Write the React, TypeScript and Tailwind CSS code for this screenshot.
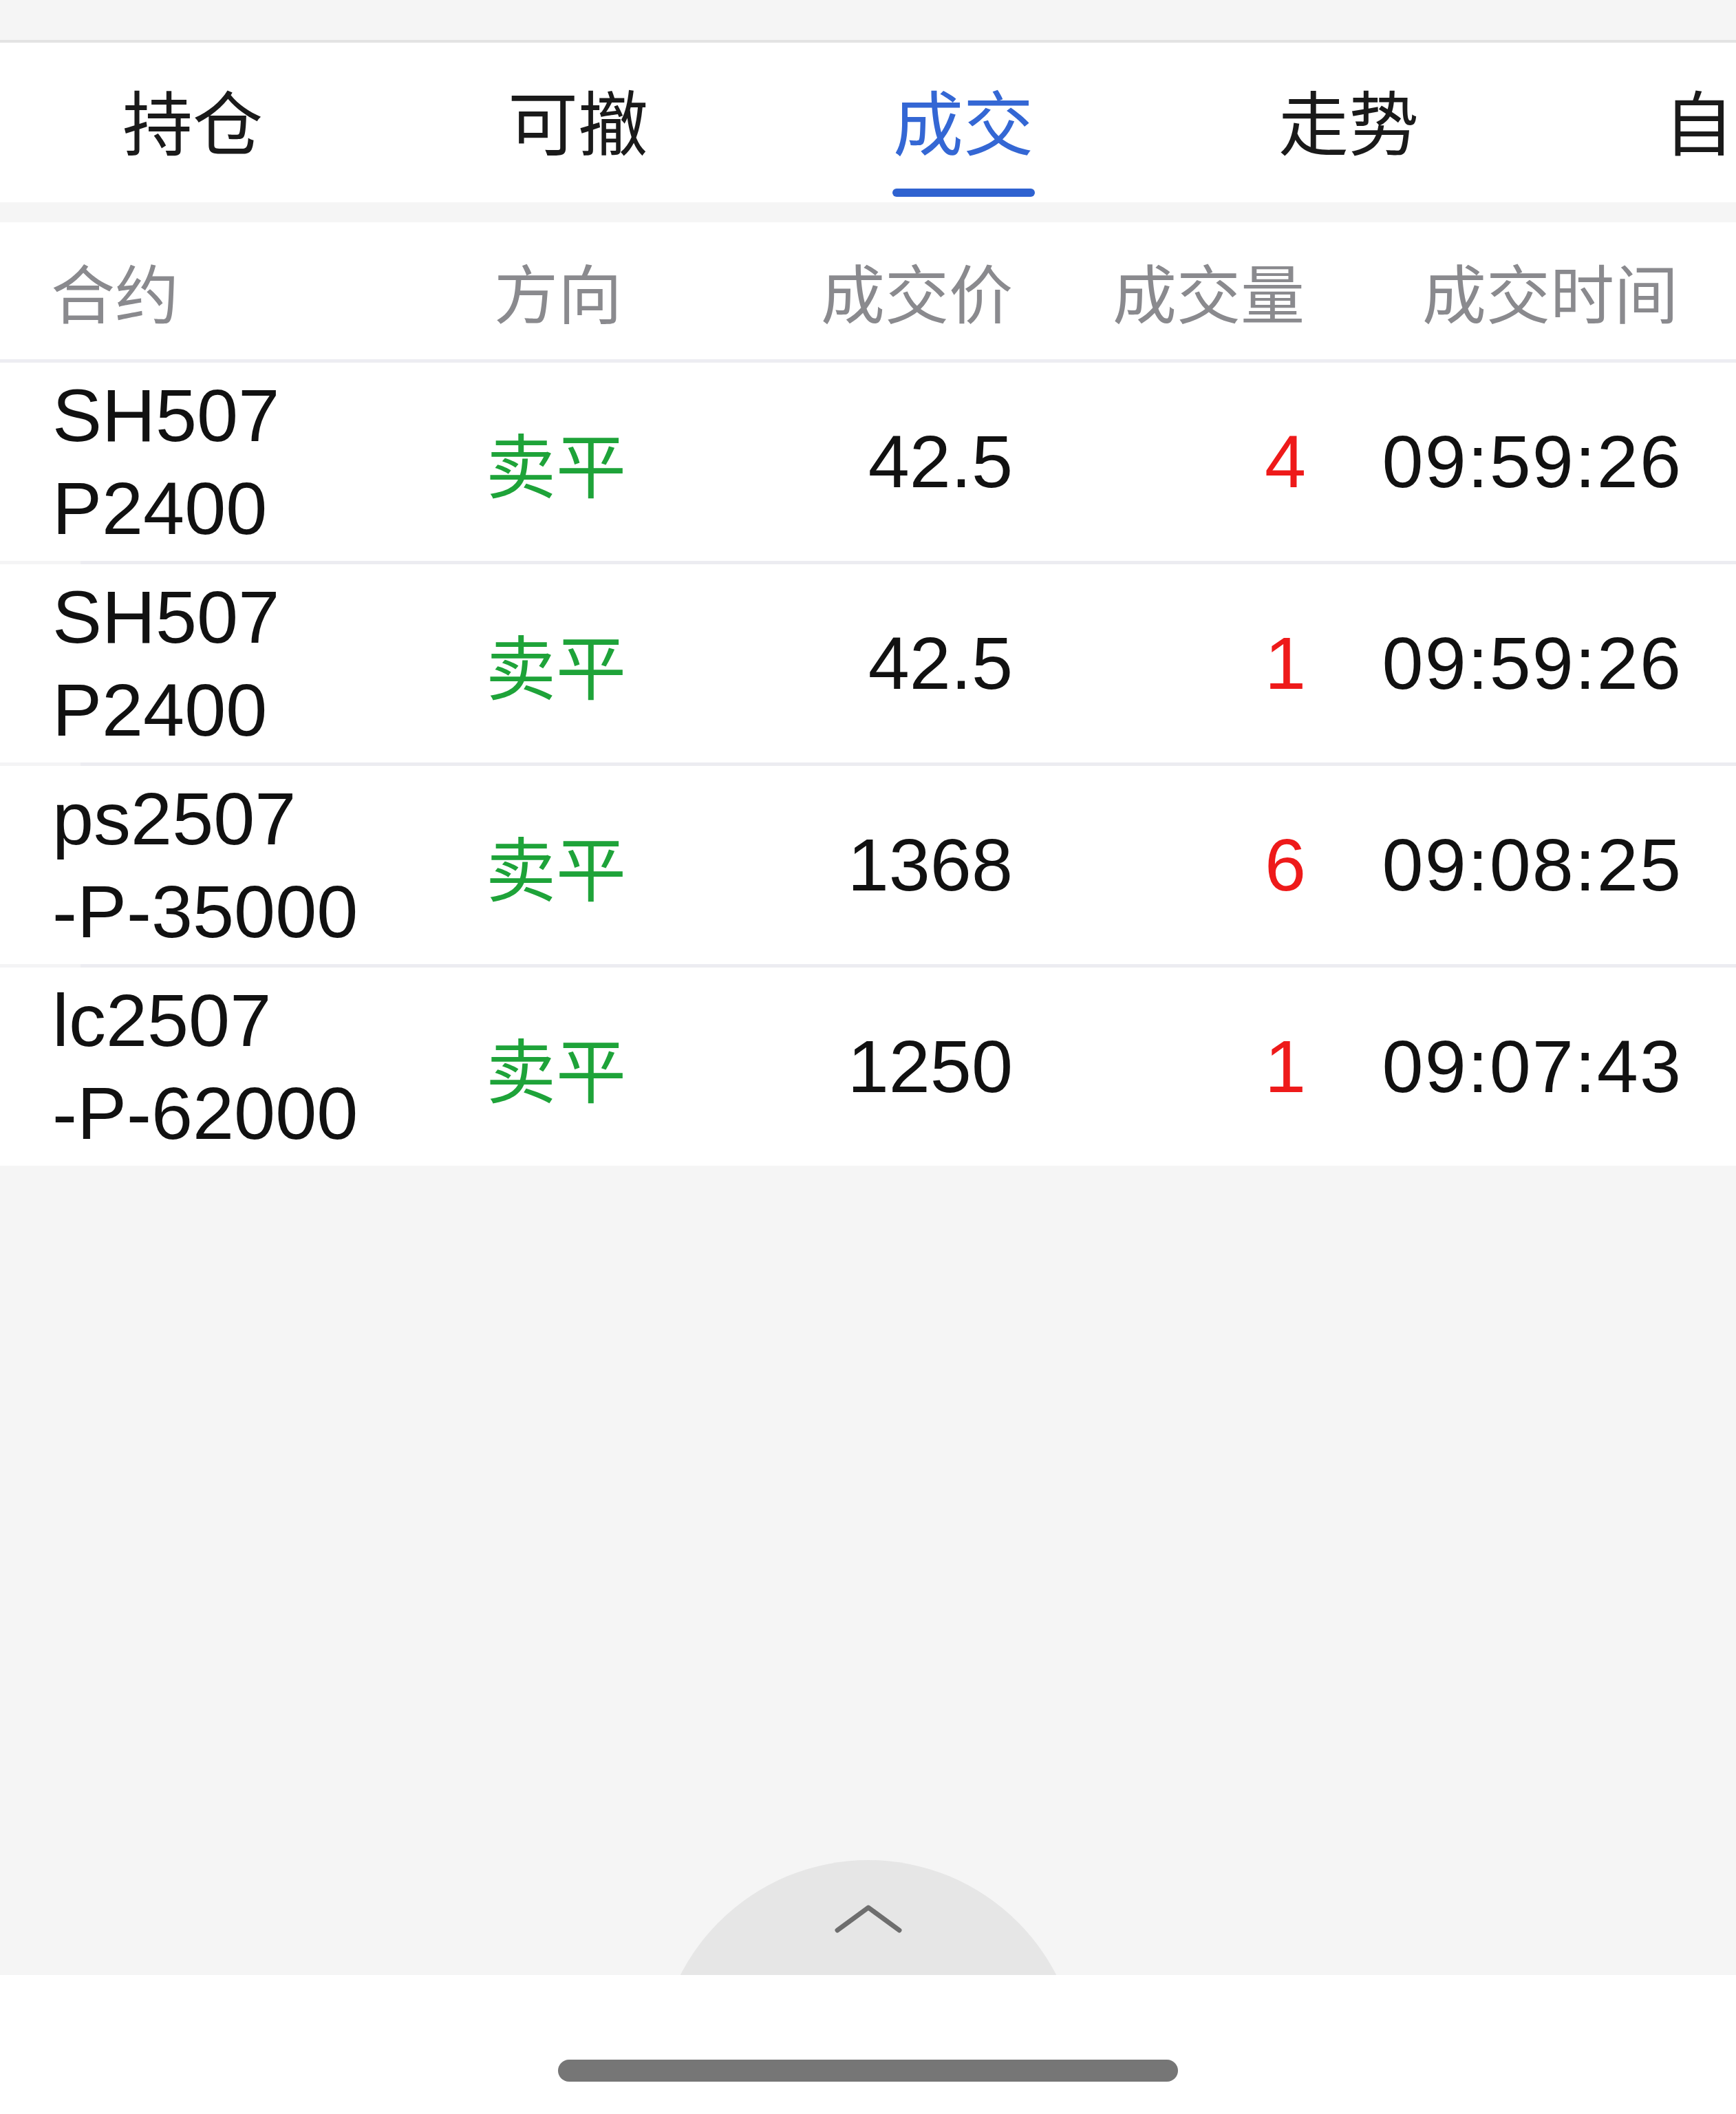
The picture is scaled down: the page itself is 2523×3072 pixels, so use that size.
import React from 'react';

const latin = "font-['Liberation_Sans','Noto_Sans_CJK_SC',sans-serif]";
const cjk = "font-['Noto_Sans_CJK_SC','Liberation_Sans',sans-serif]";

const tabs = ['持仓', '可撤', '成交', '走势', '自选'];

const trades = [
  { code: ['SH507', 'P2400'], dir: '卖平', price: '42.5', qty: '4', time: '09:59:26' },
  { code: ['SH507', 'P2400'], dir: '卖平', price: '42.5', qty: '1', time: '09:59:26' },
  { code: ['ps2507', '-P-35000'], dir: '卖平', price: '1368', qty: '6', time: '09:08:25' },
  { code: ['lc2507', '-P-62000'], dir: '卖平', price: '1250', qty: '1', time: '09:07:43' },
];

function TabBar() {
  const active = 2;
  return (
    <div className="flex h-[232px] overflow-hidden bg-white">
      {tabs.map((t, i) => (
        <div key={t} className="flex w-[560px] shrink-0 flex-col items-center pt-[52px]">
          <span
            className={`${cjk} text-[102px] leading-[120px] whitespace-nowrap ${
              i === active ? 'text-[#3467d4]' : 'text-[#1a1a1a]'
            }`}
          >
            {t}
          </span>
          {i === active && <div className="mt-[40px] h-[12px] w-[207px] rounded-full bg-[#2f62d0]" />}
        </div>
      ))}
    </div>
  );
}

function HeaderRow() {
  return (
    <div
      className={`${cjk} flex h-[204px] items-center border-b-[5px] border-[#ededf2] bg-white pl-[74px] pr-[84px] text-[93px] text-[#8a8a8e]`}
    >
      <div className="w-[640px]">合约</div>
      <div className="w-[400px] pl-[4px]">方向</div>
      <div className="w-[358px] text-right">成交价</div>
      <div className="w-[426px] pr-[2px] text-right">成交量</div>
      <div className="flex-1 text-right">成交时间</div>
    </div>
  );
}

function TradeRow({ t }: { t: (typeof trades)[number] }) {
  return (
    <div className={`${latin} flex h-[288px] items-center bg-white pl-[76px] pr-[78px] text-[108px] text-[#111111]`}>
      <div className="w-[630px] leading-[135px]">
        <div>{t.code[0]}</div>
        <div>{t.code[1]}</div>
      </div>
      <div className={`${cjk} w-[408px] text-[102px] text-[#1ea339]`}>{t.dir}</div>
      <div className="w-[358px] text-right">{t.price}</div>
      <div className="w-[426px] text-right text-[#ee1a1a]">{t.qty}</div>
      <div className="flex-1 text-right tracking-[2px]">{t.time}</div>
    </div>
  );
}

export default function App() {
  return (
    <div className="flex h-[3072px] w-full flex-col overflow-hidden bg-[#f5f5f5]">
      {/* status strip */}
      <div className="h-[62px] shrink-0 border-b-4 border-[#e3e3e3] bg-[#f5f5f5]" />

      <TabBar />
      <div className="h-[29px] shrink-0 bg-[#f5f5f5]" />

      <HeaderRow />
      {trades.map((t, i) => (
        <React.Fragment key={i}>
          <TradeRow t={t} />
          {i < trades.length - 1 && (
            <div className="flex h-[5px]">
              <div className="w-[117px] bg-[#f4f4f5]" />
              <div className="flex-1 bg-[#ececf1]" />
            </div>
          )}
        </React.Fragment>
      ))}

      {/* empty area + pull-up handle */}
      <div className="flex flex-1 flex-col items-center justify-end">
        <div className="flex h-[167px] w-[547px] justify-center overflow-hidden">
          <div className="flex h-[614px] w-[614px] shrink-0 justify-center rounded-full bg-[#e6e6e6] pt-[63px]">
            <svg width="100" height="44" viewBox="0 0 100 44" fill="none">
              <polyline
                points="5,39 50,6 95,39"
                stroke="#6e6e6e"
                strokeWidth="7"
                strokeLinecap="round"
                strokeLinejoin="round"
              />
            </svg>
          </div>
        </div>
      </div>

      {/* home indicator */}
      <div className="flex h-[202px] shrink-0 justify-center bg-white pt-[123px]">
        <div className="h-[32px] w-[901px] rounded-full bg-[#767676]" />
      </div>
    </div>
  );
}
